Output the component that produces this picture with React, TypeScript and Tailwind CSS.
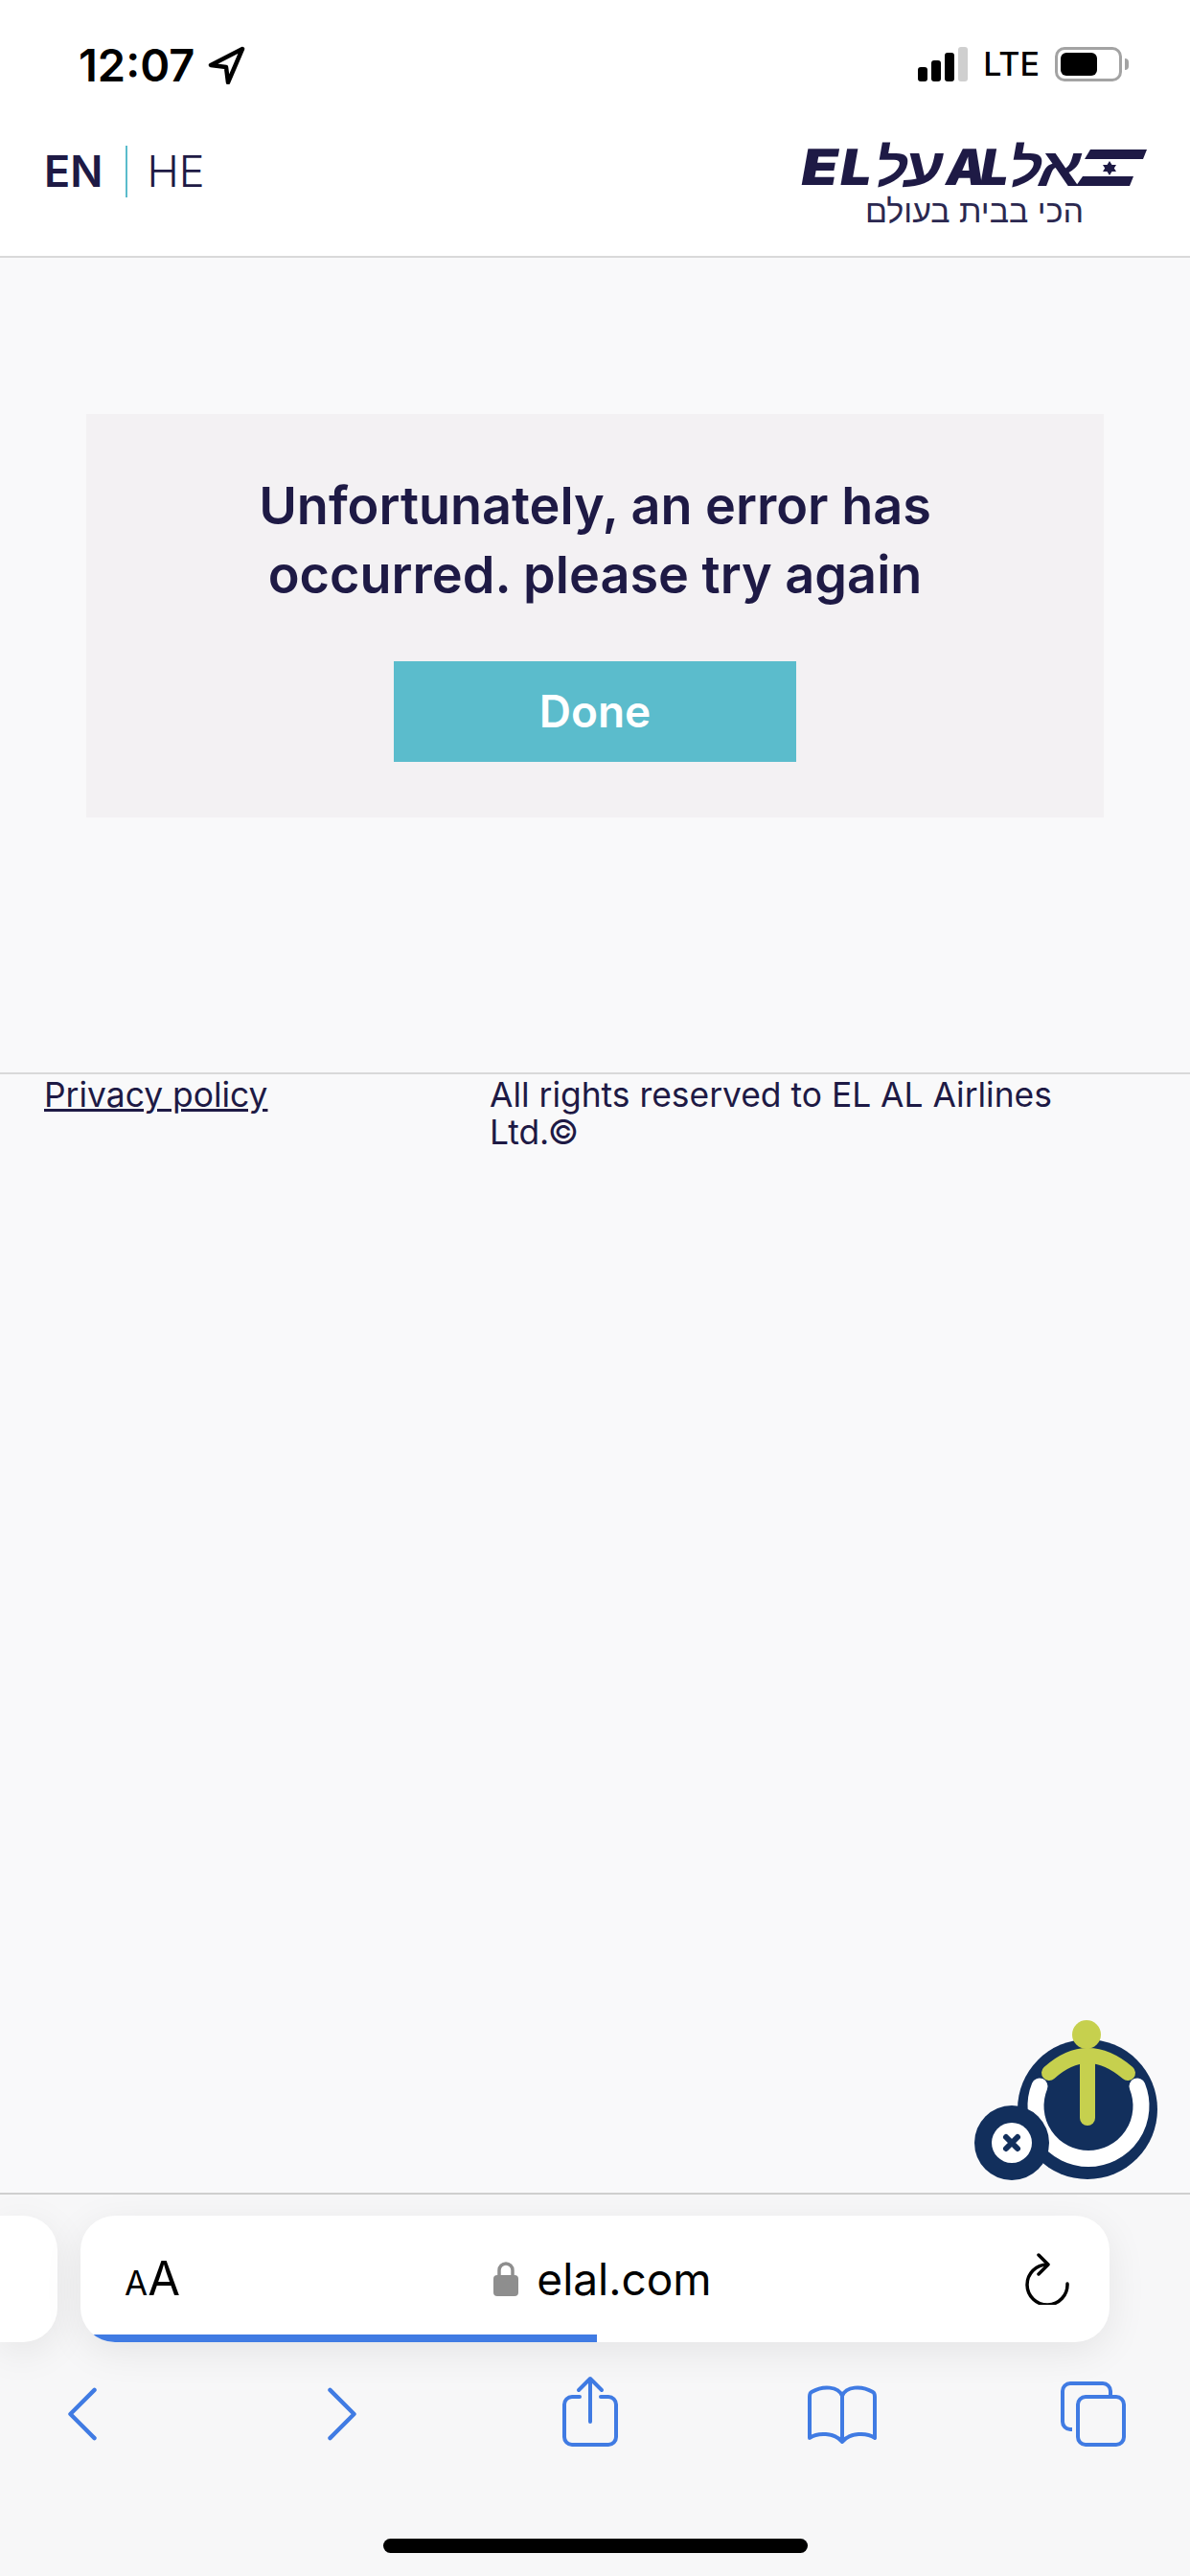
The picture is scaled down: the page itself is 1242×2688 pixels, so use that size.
function LocationArrow() {
  return (
    <svg width="40" height="40" viewBox="0 0 40 40" fill="none" stroke="#000" strokeWidth="4.5" strokeLinejoin="round">
      <path d="M36 3 L3 20 L19 22 L21 38 Z" />
    </svg>
  );
}

function Signal() {
  return (
    <div className="flex items-end gap-[4px]">
      <span className="h-[15px] w-[10px] rounded-[3px] bg-black" />
      <span className="h-[22px] w-[10px] rounded-[3px] bg-black" />
      <span className="h-[30px] w-[10px] rounded-[3px] bg-black" />
      <span className="h-[36px] w-[10px] rounded-[3px] bg-[#cfcfcf]" />
    </div>
  );
}

function Battery() {
  return (
    <div className="flex items-center gap-[3px]">
      <div className="flex h-[36px] w-[70px] items-center rounded-[10px] border-[3px] border-[#a3a3a3] p-[3px]">
        <div className="h-full w-[38px] rounded-[6px] bg-black" />
      </div>
      <div className="h-[12px] w-[4px] rounded-r-full bg-[#a3a3a3]" />
    </div>
  );
}

function StatusBar() {
  return (
    <div className="flex h-[125px] items-start justify-between bg-white pl-[82px] pr-[64px] pt-[46px]">
      <div className="flex items-center gap-[14px]">
        <span className="text-[47px] leading-[44px] font-semibold text-black">12:07</span>
        <LocationArrow />
      </div>
      <div className="flex items-center pt-[2px]">
        <Signal />
        <span className="ml-[16px] mr-[16px] text-[34px] leading-[38px] font-medium text-black">LTE</span>
        <Battery />
      </div>
    </div>
  );
}

function Logo() {
  return (
    <div className="flex w-[360px] flex-col items-center">
      <div className="flex h-[44px] w-full items-end">
        <div dir="ltr" className="flex h-[38px] w-[286px] skew-x-[-10deg] items-center text-[#1e1a45]">
          <span className="w-[41px] origin-left scale-x-[1.2] text-[52px] leading-[38px] font-black">E</span>
          <span className="w-[36px] origin-left scale-x-[1.1] text-[52px] leading-[38px] font-black">L</span>
          <span className="w-[30px] origin-left scale-x-[1.1] font-['Liberation_Sans',sans-serif] text-[56px] leading-[38px] font-bold">ל</span>
          <span className="w-[44px] origin-left scale-x-[1.2] font-['Liberation_Sans',sans-serif] text-[56px] leading-[38px] font-bold">ע</span>
          <span className="w-[36px] text-[52px] leading-[38px] font-black">A</span>
          <span className="w-[30px] text-[52px] leading-[38px] font-black">L</span>
          <span className="w-[30px] origin-left scale-x-[1.1] font-['Liberation_Sans',sans-serif] text-[56px] leading-[38px] font-bold">ל</span>
          <span className="w-[39px] origin-left scale-x-[1.2] font-['Liberation_Sans',sans-serif] text-[56px] leading-[38px] font-bold">א</span>
        </div>
        <svg width="74" height="38" viewBox="0 0 74 38" fill="#1e1a45">
          <path d="M15 0H74L70 10H9Z" />
          <path d="M7 28H60L56 38H0Z" />
          <path d="M35 12l2.5 4h4.5l-2.2 3.5 2.2 3.5h-4.5l-2.5 4-2.5-4h-4.5l2.2-3.5-2.2-3.5h4.5z" />
        </svg>
      </div>
      <div
        dir="rtl"
        className="mt-[6px] font-['Liberation_Sans',sans-serif] text-[34px] leading-[40px] text-[#2b2850]"
      >
        הכי בבית בעולם
      </div>
    </div>
  );
}

function Header() {
  return (
    <div className="box-content flex h-[117px] items-start justify-between border-b-[2px] border-[#d9d9d9] bg-white pl-[46px] pr-[45px] pt-[25px]">
      <div className="flex items-center pt-[2px] text-[45px] leading-[54px] text-[#1e1a45]">
        <span className="font-semibold">EN</span>
        <span className="ml-[24px] mr-[20px] h-[54px] w-[2px] bg-[#5bbccc]" />
        <span className="font-light">HE</span>
      </div>
      <Logo />
    </div>
  );
}

function ErrorCard() {
  return (
    <div className="mx-[90px] mt-[163px] flex h-[421px] flex-col items-center bg-[#f3f1f3] pt-[60px]">
      <h1 className="text-center text-[54px] leading-[72px] font-semibold text-[#1e1a45]">
        Unfortunately, an error has
        <br />
        occurred. please try again
      </h1>
      <button className="mt-[54px] h-[105px] w-[420px] bg-[#5bbccc] text-[46px] font-semibold text-white">
        Done
      </button>
    </div>
  );
}

function Footer() {
  return (
    <div className="flex border-t-[2px] border-[#d9d9d9] pl-[46px] pt-[2px] text-[35.4px] leading-[39px] text-[#1e1a45]">
      <a className="w-[465px] underline">Privacy policy</a>
      <p className="w-[620px]">All rights reserved to EL AL Airlines Ltd.©</p>
    </div>
  );
}

function AccessibilityWidget() {
  return (
    <svg className="absolute left-[1010px] top-[2100px]" width="212" height="180" viewBox="0 0 212 180">
      <circle cx="125" cy="101" r="73" fill="#122f5c" />
      <path d="M75 77 A55 55 0 1 0 177 77" fill="none" stroke="#fff" strokeWidth="17" strokeLinecap="round" />
      <circle cx="124" cy="23" r="15" fill="#c6d04e" />
      <path d="M125 47 V110" stroke="#c6d04e" strokeWidth="16" strokeLinecap="round" />
      <path d="M85 63 Q125 27 167 63" fill="none" stroke="#c6d04e" strokeWidth="16" strokeLinecap="round" />
      <circle cx="46" cy="136" r="39" fill="#122f5c" />
      <circle cx="46" cy="136" r="21" fill="#fff" />
      <path d="M40 130 L52 142 M52 130 L40 142" stroke="#122f5c" strokeWidth="6" strokeLinecap="round" />
    </svg>
  );
}

function AddressBar() {
  return (
    <div className="flex h-[132px] items-stretch gap-[24px]">
      <div className="h-full w-[60px] rounded-r-[36px] bg-white shadow-[0_10px_40px_rgba(0,0,0,0.08)]" />
      <div className="relative flex w-[1074px] items-center justify-between overflow-hidden rounded-[36px] bg-white pl-[46px] pr-[42px] text-black shadow-[0_10px_40px_rgba(0,0,0,0.08)]">
        <div className="flex items-baseline">
          <span className="text-[35px]">A</span>
          <span className="text-[49px]">A</span>
        </div>
        <div className="flex items-center gap-[19px] text-[46px]">
          <svg width="26" height="36" viewBox="0 0 26 36">
            <path d="M6 16V9a7 7 0 0 1 14 0v7" fill="none" stroke="#8e8e8e" strokeWidth="3.5" />
            <rect x="0" y="14" width="26" height="22" rx="4" fill="#8e8e8e" />
          </svg>
          <span>elal.com</span>
        </div>
        <svg width="46" height="54" viewBox="0 0 46 54" fill="none" stroke="#000" strokeWidth="3.5" strokeLinecap="round" strokeLinejoin="round">
          <path d="M23 12 A21 21 0 1 0 44 32" />
          <path d="M14 2 L24 12 L14 22" />
        </svg>
        <div className="absolute bottom-0 left-0 h-[8px] w-[539px] bg-[#407be3]" />
      </div>
    </div>
  );
}

function BrowserBar() {
  return (
    <div className="mt-auto flex h-[400px] flex-col border-t-[2px] border-[#cfcfcf] bg-[#f7f7f8] pt-[22px]">
      <AddressBar />
      <div className="mt-[36px] flex h-[78px] items-center pl-[69px]">
        <svg width="34" height="56" viewBox="0 0 34 58" fill="none" stroke="#407be3" strokeWidth="4.5" strokeLinecap="round" strokeLinejoin="round">
          <path d="M30 3 L4 29 L30 55" />
        </svg>
        <svg className="ml-[237px]" width="34" height="56" viewBox="0 0 34 58" fill="none" stroke="#407be3" strokeWidth="4.5" strokeLinecap="round" strokeLinejoin="round">
          <path d="M4 3 L30 29 L4 55" />
        </svg>
        <svg className="ml-[213px] mb-[6px]" width="58" height="74" viewBox="0 0 58 74" fill="none" stroke="#407be3" strokeWidth="4" strokeLinecap="round" strokeLinejoin="round">
          <path d="M18 22H10a8 8 0 0 0-8 8v34a8 8 0 0 0 8 8h38a8 8 0 0 0 8-8V30a8 8 0 0 0-8-8h-8" />
          <path d="M29 48V3M17 15 29 3l12 12" />
        </svg>
        <svg className="ml-[198px]" width="72" height="62" viewBox="0 0 72 62" fill="none" stroke="#407be3" strokeWidth="4" strokeLinejoin="round">
          <path d="M36 12C32 2 16 1 4 8C2 9 2 11 2 13V56C10 50 28 50 36 60C44 50 62 50 70 56V13C70 11 70 9 68 8C56 1 40 2 36 12Z" />
          <path d="M36 12V60" />
        </svg>
        <svg className="ml-[192px]" width="68" height="68" viewBox="0 0 68 68" fill="none" stroke="#407be3" strokeWidth="4" strokeLinejoin="round">
          <path d="M12 50H10a8 8 0 0 1-8-8V10a8 8 0 0 1 8-8h34a8 8 0 0 1 8 8v4" />
          <rect x="18" y="16" width="48" height="50" rx="8" />
        </svg>
      </div>
      <div className="mt-auto mb-[24px] h-[15px] w-[443px] self-center rounded-full bg-black" />
    </div>
  );
}

export default function App() {
  return (
    <div className="relative flex h-[2688px] w-[1242px] flex-col overflow-hidden bg-[#f9f9fa] font-['Inter',sans-serif]">
      <StatusBar />
      <Header />
      <div className="h-[850px]">
        <ErrorCard />
      </div>
      <Footer />
      <BrowserBar />
      <AccessibilityWidget />
    </div>
  );
}
